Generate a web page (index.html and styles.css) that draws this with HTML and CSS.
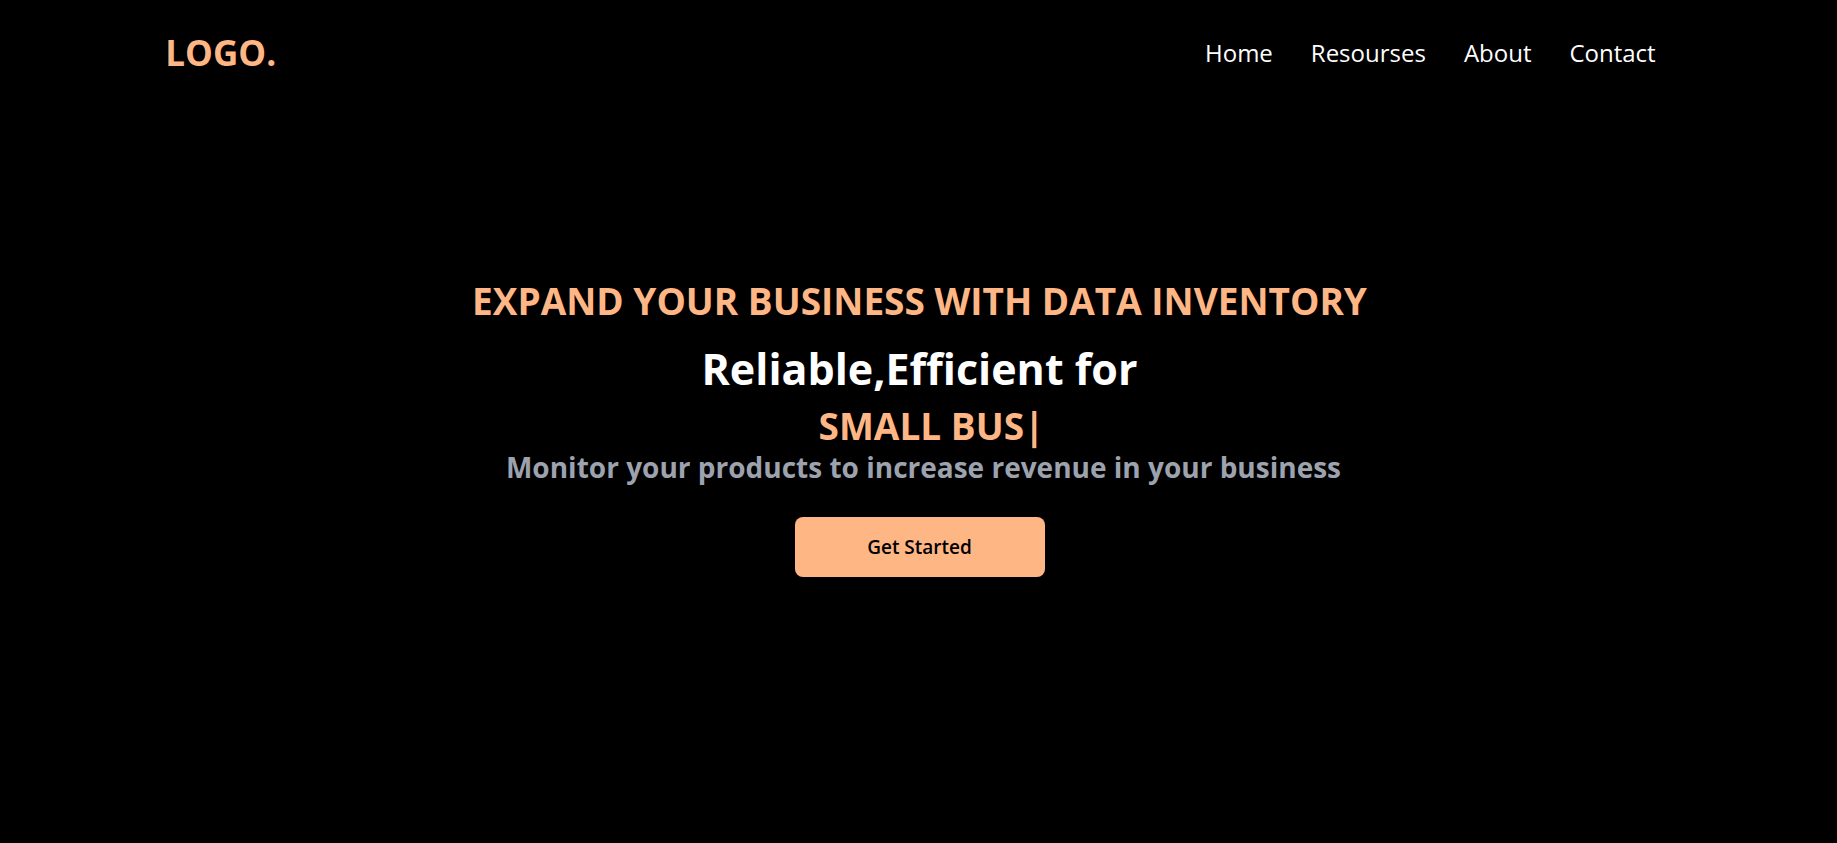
FILE: index.html
```html
<!DOCTYPE html>
<html lang="en">
<head>
<meta charset="utf-8">
<meta name="viewport" content="width=device-width, initial-scale=1">
<title>Data Inventory</title>
<link rel="stylesheet" href="styles.css">
</head>
<body>
<header class="navbar">
  <h1 class="logo">LOGO.</h1>
  <nav aria-label="Main">
    <ul class="menu">
      <li><a href="#home">Home</a></li>
      <li><a href="#resources">Resourses</a></li>
      <li><a href="#about">About</a></li>
      <li><a href="#contact">Contact</a></li>
    </ul>
  </nav>
</header>
<main class="hero">
  <p class="tagline">EXPAND YOUR BUSINESS WITH DATA INVENTORY</p>
  <h2 class="headline">Reliable,Efficient for</h2>
  <p class="typed">SMALL BUS|</p>
  <p class="subline">Monitor your products to increase revenue in your business</p>
  <button class="cta" type="button">Get Started</button>
</main>
</body>
</html>
```
FILE: styles.css
```css
* {
  box-sizing: border-box;
  margin: 0;
  padding: 0;
}

body {
  background: #000;
  color: #fff;
  font-family: "Open Sans", "Noto Sans", sans-serif;
}

.navbar {
  display: flex;
  justify-content: space-between;
  align-items: center;
  height: 104px;
  padding: 0 9%;
}

.logo {
  color: #ffb685;
  font-size: 35px;
  font-weight: 700;
}

.menu {
  display: flex;
  gap: 38px;
  padding-right: 16px;
  list-style: none;
}

.menu a {
  color: #fff;
  font-size: 24px;
  text-decoration: none;
}

.hero {
  display: flex;
  flex-direction: column;
  align-items: center;
  padding: 173px 0 0 2px;
  text-align: center;
}

.tagline,
.typed {
  color: #ffb685;
  font-size: 37px;
  font-weight: 700;
  line-height: 48px;
}

.headline {
  padding: 16px 0 8px;
  font-size: 43px;
  font-weight: 700;
  line-height: 56px;
}

.typed {
  padding-left: 24px;
  line-height: 42px;
}

.subline {
  padding-left: 8px;
  color: #9ca3af;
  font-size: 28px;
  font-weight: 700;
  line-height: 40px;
}

.cta {
  width: 250px;
  height: 60px;
  margin-top: 30px;
  border: 0;
  border-radius: 8px;
  background: #ffb685;
  color: #000;
  font: 600 19px "Open Sans", "Noto Sans", sans-serif;
}
```
